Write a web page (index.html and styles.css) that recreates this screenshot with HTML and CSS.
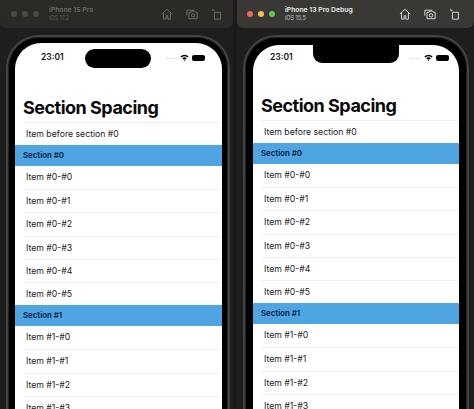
FILE: index.html
```html
<!DOCTYPE html>
<html lang="en">
<head>
<meta charset="utf-8">
<title>Section Spacing</title>
<link rel="stylesheet" href="styles.css">
</head>
<body>
<div class="desk">
  <section class="sim sim-left">
    <header class="bar bar-dim">
      <div class="lights"><i></i><i></i><i></i></div>
      <div class="names"><b>iPhone 15 Pro</b><span>iOS 17.2</span></div>
      <div class="tools">
        <svg viewBox="0 0 14 14"><path d="M1 7 7 1.500 13 7M3 5.500V13H6V9H8V13H11V5.500"/></svg>
        <svg viewBox="0 0 14 14"><path d="M1 9V2.500H9M3.500 12.500V5H6L7 3.500H10L11 5H13V12.500Z"/><circle cx="8.200" cy="8.600" r="2"/></svg>
        <svg viewBox="0 0 14 14"><path d="M4 5H11V13H4ZM2 1V3H4"/></svg>
      </div>
    </header>
    <div class="device">
      <div class="screen">
        <div class="status">
          <span class="time">23:01</span>
          <span class="island"></span>
          <span class="signal">
            <span class="dots">....</span>
            <svg class="wifi" viewBox="0 0 12 9"><path d="M.5 3A8 8 0 0 1 11.500 3L10 4.500A6 6 0 0 0 2 4.500ZM3 5.500A4.500 4.500 0 0 1 9 5.500L7.500 7A2.500 2.500 0 0 0 4.500 7ZM6 9 4.900 7.800A1.600 1.600 0 0 1 7.100 7.800Z"/></svg>
            <span class="battery"></span>
          </span>
        </div>
        <h1>Section Spacing</h1>
        <div class="row first">Item before section #0</div>
        <div class="band">Section #0</div>
        <div class="row">Item #0-#0</div>
        <div class="row">Item #0-#1</div>
        <div class="row">Item #0-#2</div>
        <div class="row">Item #0-#3</div>
        <div class="row">Item #0-#4</div>
        <div class="row">Item #0-#5</div>
        <div class="band">Section #1</div>
        <div class="row">Item #1-#0</div>
        <div class="row">Item #1-#1</div>
        <div class="row">Item #1-#2</div>
        <div class="row">Item #1-#3</div>
      </div>
    </div>
  </section>
  <section class="sim sim-right">
    <header class="bar">
      <div class="lights"><i class="red"></i><i class="yellow"></i><i class="green"></i></div>
      <div class="names"><b>iPhone 13 Pro Debug</b><span>iOS 15.5</span></div>
      <div class="tools">
        <svg viewBox="0 0 14 14"><path d="M1 7 7 1.500 13 7M3 5.500V13H6V9H8V13H11V5.500"/></svg>
        <svg viewBox="0 0 14 14"><path d="M1 9V2.500H9M3.500 12.500V5H6L7 3.500H10L11 5H13V12.500Z"/><circle cx="8.200" cy="8.600" r="2"/></svg>
        <svg viewBox="0 0 14 14"><path d="M4 5H11V13H4ZM2 1V3H4"/></svg>
      </div>
    </header>
    <div class="device">
      <div class="screen">
        <div class="status">
          <span class="time">23:01</span>
          <span class="notch"></span>
          <span class="signal">
            <span class="dots">....</span>
            <svg class="wifi" viewBox="0 0 12 9"><path d="M.5 3A8 8 0 0 1 11.500 3L10 4.500A6 6 0 0 0 2 4.500ZM3 5.500A4.500 4.500 0 0 1 9 5.500L7.500 7A2.500 2.500 0 0 0 4.500 7ZM6 9 4.900 7.800A1.600 1.600 0 0 1 7.100 7.800Z"/></svg>
            <span class="battery"></span>
          </span>
        </div>
        <h1>Section Spacing</h1>
        <div class="row first">Item before section #0</div>
        <div class="band">Section #0</div>
        <div class="row">Item #0-#0</div>
        <div class="row">Item #0-#1</div>
        <div class="row">Item #0-#2</div>
        <div class="row">Item #0-#3</div>
        <div class="row">Item #0-#4</div>
        <div class="row">Item #0-#5</div>
        <div class="band">Section #1</div>
        <div class="row">Item #1-#0</div>
        <div class="row">Item #1-#1</div>
        <div class="row">Item #1-#2</div>
        <div class="row">Item #1-#3</div>
      </div>
    </div>
  </section>
</div>
</body>
</html>
```

FILE: styles.css
```css
* { box-sizing: border-box; }
html, body { margin: 0; height: 100%; overflow: hidden; background: #1b1b1b; }
body { font-family: Inter, "Liberation Sans", sans-serif; }
.desk { display: flex; justify-content: space-between; width: 474px; height: 409px; overflow: hidden; }
.sim { width: 237px; height: 409px; overflow: hidden; background: #1e1e1e; }
.sim-left { width: 233px; }
.bar { height: 28px; display: flex; align-items: center; padding: 0 10px; background: #3a3835; border-radius: 0 0 6px 6px; color: #eee; }
.bar-dim { background: #2b2a27; color: #6b6a66; padding-left: 11px; }
.lights { display: flex; gap: 5px; width: 38px; }
.lights i { width: 6px; height: 6px; border-radius: 50%; background: #4a4a48; }
.lights .red { background: #ec6a5e; }
.lights .yellow { background: #f4bf4f; }
.lights .green { background: #61c554; }
.names { flex: 1; display: flex; flex-direction: column; gap: 1px; }
.names b { font-size: 6.8px; line-height: 8px; font-weight: 600; }
.names span { font-size: 5.5px; line-height: 7px; opacity: .75; }
.tools { display: flex; gap: 13px; }
.sim-right .tools { padding-right: 3px; }
.tools svg { width: 12px; height: 12px; fill: none; stroke: currentColor; stroke-width: 1; }
.bar-dim .tools svg { stroke: #77756f; }

.device { width: 224px; height: 382px; margin: 7px 0 0 6px; background: #000; border: 2px solid #444; border-bottom: 0; border-radius: 33px 33px 0 0; box-shadow: inset 0 0 0 1px #222; padding: 6px 6px 0 7px; }
.sim-right .device { width: 226px; padding: 8px 8px 0; }
.screen { background: #fff; height: 100%; border-radius: 26px 26px 0 0; overflow: hidden; color: #111; }

.status { position: relative; height: 37px; display: flex; justify-content: space-between; padding: 8px 17px 0 26px; }
.sim-right .status { padding: 6px 10px 0 17px; height: 35px; }
.time { font-size: 8.5px; line-height: 13px; font-weight: 600; }
.island { position: absolute; left: 70px; top: 6px; width: 66px; height: 19px; background: #000; border-radius: 10px; }
.notch { position: absolute; left: 60px; top: 0; width: 86px; height: 18px; background: #000; border-radius: 0 0 9px 9px; }
.signal { display: flex; gap: 3px; align-items: center; height: 13px; }
.dots { font-size: 7px; line-height: 7px; letter-spacing: .6px; color: #aaa; margin-top: -2px; }
.wifi { width: 9px; height: 7px; fill: #000; }
.battery { width: 13px; height: 6px; border-radius: 2px; background: #000; }

h1 { margin: 14px 0 1px; padding-left: 8px; font-size: 18px; line-height: 27px; font-weight: 700; letter-spacing: -.5px; color: #0a0a0a; }
.sim-right h1 { margin-top: 12px; }

.row { height: 23.2px; margin-left: 9px; padding-left: 2px; font-size: 8.7px; line-height: 22px; border-top: 1px solid #f0f0f0; color: #222; }
.first { height: 23px; }
.band { height: 21px; padding-left: 8px; font-size: 7.8px; line-height: 21px; font-weight: 700; color: #0c2a50; background: #4fa5e2; }
.band + .row { border-top: 0; line-height: 23px; }
```
